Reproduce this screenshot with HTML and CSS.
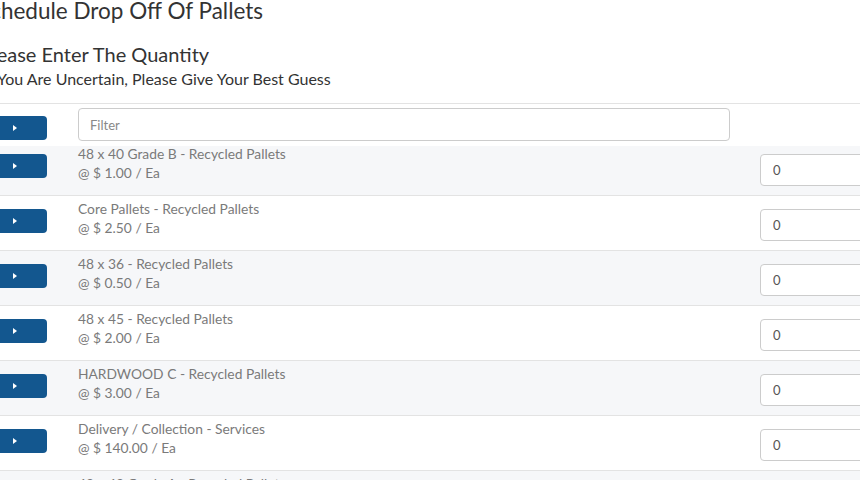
FILE: index.html
```html
<!DOCTYPE html>
<html>
<head>
<meta charset="utf-8">
<link rel="stylesheet" href="styles.css">
</head>
<body>
<div class="page">
  <h1 class="title">Schedule Drop Off Of Pallets</h1>
  <h2 class="subtitle">Please Enter The Quantity</h2>
  <p class="hint">If You Are Uncertain, Please Give Your Best Guess</p>

  <div class="table">
    <div class="row filter-row">
      <div class="cell-btn"><button class="expand"><span class="caret"></span></button></div>
      <div class="cell-text"><input class="filter" type="text" placeholder="Filter"></div>
      <div class="cell-qty"></div>
    </div>

    <div class="row item shaded first">
      <div class="cell-btn"><button class="expand"><span class="caret"></span></button></div>
      <div class="cell-text"><div class="name">48 x 40 Grade B - Recycled Pallets</div><div class="price">@ $ 1.00 / Ea</div></div>
      <div class="cell-qty"><input class="qty" type="text" value="0"></div>
    </div>
    <div class="row item">
      <div class="cell-btn"><button class="expand"><span class="caret"></span></button></div>
      <div class="cell-text"><div class="name">Core Pallets - Recycled Pallets</div><div class="price">@ $ 2.50 / Ea</div></div>
      <div class="cell-qty"><input class="qty" type="text" value="0"></div>
    </div>
    <div class="row item shaded">
      <div class="cell-btn"><button class="expand"><span class="caret"></span></button></div>
      <div class="cell-text"><div class="name">48 x 36 - Recycled Pallets</div><div class="price">@ $ 0.50 / Ea</div></div>
      <div class="cell-qty"><input class="qty" type="text" value="0"></div>
    </div>
    <div class="row item">
      <div class="cell-btn"><button class="expand"><span class="caret"></span></button></div>
      <div class="cell-text"><div class="name">48 x 45 - Recycled Pallets</div><div class="price">@ $ 2.00 / Ea</div></div>
      <div class="cell-qty"><input class="qty" type="text" value="0"></div>
    </div>
    <div class="row item shaded">
      <div class="cell-btn"><button class="expand"><span class="caret"></span></button></div>
      <div class="cell-text"><div class="name">HARDWOOD C - Recycled Pallets</div><div class="price">@ $ 3.00 / Ea</div></div>
      <div class="cell-qty"><input class="qty" type="text" value="0"></div>
    </div>
    <div class="row item">
      <div class="cell-btn"><button class="expand"><span class="caret"></span></button></div>
      <div class="cell-text"><div class="name">Delivery / Collection - Services</div><div class="price">@ $ 140.00 / Ea</div></div>
      <div class="cell-qty"><input class="qty" type="text" value="0"></div>
    </div>
    <div class="row item shaded">
      <div class="cell-btn"><button class="expand"><span class="caret"></span></button></div>
      <div class="cell-text"><div class="name">48 x 48 Grade A - Recycled Pallets</div><div class="price">@ $ 4.00 / Ea</div></div>
      <div class="cell-qty"><input class="qty" type="text" value="0"></div>
    </div>
  </div>
</div>
</body>
</html>
```

FILE: styles.css
```css
html, body {
  margin: 0;
  padding: 0;
  background: #fff;
  overflow: hidden;
}
body {
  width: 860px;
  height: 480px;
  font-family: Lato, "Open Sans", sans-serif;
  color: #333;
}
.page {
  margin-left: -20px;
  width: 1000px;
}
.title {
  margin: -5px 0 0 -2px;
  font-size: 22.5px;
  font-weight: 400;
  line-height: 32px;
}
.subtitle {
  margin: 14px 0 0 0;
  font-size: 20px;
  font-weight: 400;
  line-height: 26px;
}
.hint {
  margin: 1px 0 0 4px;
  font-size: 16px;
  line-height: 22px;
}
.table {
  margin-top: 13px;
  border-top: 1px solid #e3e3e3;
}
.row {
  display: grid;
  grid-template-columns: 98px 682px 1fr;
  align-items: start;
  border-bottom: 1px solid #e3e3e3;
}
.row.shaded {
  background: #f6f7f9;
}
.filter-row {
  border-bottom: none;
  padding: 4px 0 5px;
}
.filter-row .cell-btn {
  padding-top: 8px;
}
.item {
  height: 54px;
}
.item .cell-btn {
  padding-top: 13px;
}
.item .cell-text {
  padding-top: 3px;
}
.item .cell-qty {
  padding-top: 13px;
}
.item.first {
  height: 49px;
}
.item.first .cell-btn,
.item.first .cell-qty {
  padding-top: 8px;
}
.item.first .cell-text {
  padding-top: 0;
  margin-top: -2px;
}
.expand {
  display: flex;
  align-items: center;
  justify-content: center;
  width: 67px;
  height: 24px;
  border: none;
  border-radius: 4px;
  background: #13578f;
  padding: 0;
}
.caret {
  width: 0;
  height: 0;
  border-top: 3px solid transparent;
  border-bottom: 3px solid transparent;
  border-left: 4px solid #fff;
  margin-left: 2px;
}
.filter {
  box-sizing: border-box;
  width: 652px;
  height: 33px;
  border: 1px solid #ccc;
  border-radius: 4px;
  padding: 0 11px;
  font-family: Lato, "Open Sans", sans-serif;
  font-size: 13px;
  color: #555;
}
.filter::placeholder {
  color: #888;
}
.name, .price {
  font-size: 13.8px;
  line-height: 19px;
  color: #7a7a7a;
}
.qty {
  box-sizing: border-box;
  width: 160px;
  height: 32px;
  border: 1px solid #ccc;
  border-radius: 4px;
  padding: 0 12px;
  font-family: Lato, "Open Sans", sans-serif;
  font-size: 13px;
  color: #555;
}
```
